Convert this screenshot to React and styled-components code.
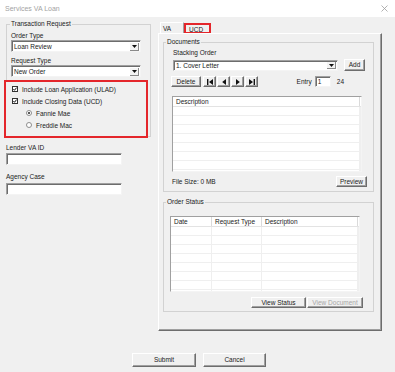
import React from 'react'
import styled, { createGlobalStyle } from 'styled-components'

const Global = createGlobalStyle`
  body {
    margin: 0;
    background: #f0f0f0;
    font-family: "Liberation Sans", Arial, sans-serif;
    font-size: 6.5px;
    color: #1a1a1a;
  }
`

const Window = styled.div`
  width: 395px;
  height: 372px;
  background: #f0f0f0;
  display: flex;
  flex-direction: column;
  overflow: hidden;
`

const TitleBar = styled.div`
  height: 17px;
  flex: none;
  background: #fff;
  color: #a3a3a3;
  font-size: 7px;
  display: flex;
  align-items: center;
  justify-content: space-between;
  padding: 0 7px 0 5px;
`

const Main = styled.div`
  display: flex;
  align-items: flex-start;
  gap: 7px;
  padding-left: 6px;
`

const LeftCol = styled.div`
  width: 145px;
  display: flex;
  flex-direction: column;
  margin-top: 3px;
`

const Group = styled.fieldset`
  margin: ${p => p.$mt || 0}px 0 0;
  padding: ${p => p.$pad};
  border: 1px solid #d2d2d2;
  min-width: 0;
  display: flex;
  flex-direction: column;
`

const Legend = styled.legend`
  padding: 0 1px;
  margin-left: ${p => p.$ml}px;
  line-height: 8px;
`

const Label = styled.div`
  height: 9px;
  line-height: 9px;
  margin-top: ${p => p.$mt || 0}px;
  white-space: nowrap;
`

const sunken = `
  background: #fff;
  border: 1px solid;
  border-color: #a0a0a0 #f4f4f4 #f4f4f4 #a0a0a0;
  box-shadow: inset 1px 1px 0 #6d6d6d;
  box-sizing: border-box;
`

const Combo = styled.div`
  ${sunken}
  width: ${p => p.$w}px;
  height: ${p => p.$h || 12}px;
  flex: none;
  display: flex;
  align-items: center;
  padding-left: 2px;
`

const ComboText = styled.span`
  flex: 1;
  white-space: nowrap;
`

const ComboArrow = styled.span`
  width: 8px;
  height: calc(100% - 3px);
  margin-right: 1px;
  margin-top: 1px;
  background: #f4f4f4;
  border-right: 1px solid #8a8a8a;
  border-bottom: 1px solid #8a8a8a;
  display: flex;
  align-items: center;
  justify-content: center;
`

const TextBox = styled.div`
  ${sunken}
  width: ${p => p.$w}px;
  height: ${p => p.$h || 12}px;
  flex: none;
  padding-left: 2px;
  line-height: ${p => (p.$h || 12) - 2}px;
`

const CheckPanel = styled.div`
  margin: 3px -3px -2px -7px;
  border: 2px solid #e4262b;
  background: #f0f0f0;
  padding: 1px 0 5px 6px;
`

const CheckRow = styled.div`
  height: 12px;
  display: flex;
  align-items: center;
  gap: 4px;
  padding-left: ${p => p.$indent || 0}px;
  white-space: nowrap;
`

const CheckBox = styled.span`
  width: 6px;
  height: 6px;
  box-sizing: border-box;
  border: 1px solid #333;
  background: #fff;
  display: flex;
  align-items: center;
  justify-content: center;
`

const Radio = styled.span`
  width: 6px;
  height: 6px;
  box-sizing: border-box;
  border: 1px solid #8d8d8d;
  border-radius: 50%;
  background: #fff;
  display: flex;
  align-items: center;
  justify-content: center;
  &::after {
    content: "";
    width: 2px;
    height: 2px;
    border-radius: 50%;
    background: ${p => (p.$on ? '#222' : 'transparent')};
  }
`

const TabControl = styled.div`
  width: 224px;
  margin-top: 5px;
  display: flex;
  flex-direction: column;
`

const TabStrip = styled.div`
  height: 11px;
  display: flex;
  align-items: flex-end;
  padding-left: 2px;
`

const Tab = styled.div`
  width: ${p => p.$w}px;
  height: ${p => (p.$active ? 11 : 11)}px;
  box-sizing: border-box;
  padding-left: ${p => p.$pl}px;
  display: flex;
  align-items: center;
  border-left: 1px solid ${p => (p.$active ? '#fff' : 'transparent')};
  border-top: 1px solid ${p => (p.$active ? '#fff' : 'transparent')};
  border-right: 1px solid ${p => (p.$active ? '#a0a0a0' : 'transparent')};
  margin-bottom: ${p => (p.$active ? 0 : -1)}px;
  outline: ${p => (p.$marked ? '2px solid #e4262b' : 'none')};
  outline-offset: -2px;
`

const Panel = styled.div`
  height: 298px;
  box-sizing: border-box;
  border: 1px solid;
  border-color: #fff #6d6d6d #6d6d6d #fff;
  box-shadow: inset -1px -1px 0 #a0a0a0;
  padding: 4px 7px 0 4px;
  display: flex;
  flex-direction: column;
`

const Row = styled.div`
  display: flex;
  align-items: center;
  height: ${p => p.$h}px;
  margin-top: ${p => p.$mt || 0}px;
  gap: ${p => p.$gap || 0}px;
  justify-content: ${p => p.$justify || 'flex-start'};
`

const Btn = styled.button`
  width: ${p => p.$w}px;
  height: ${p => p.$h || 11}px;
  flex: none;
  margin: ${p => p.$m || 0};
  padding: 0;
  box-sizing: border-box;
  font: inherit;
  line-height: ${p => (p.$h || 11) - 2}px;
  color: ${p => (p.disabled ? '#a6a6a6' : '#1a1a1a')};
  background: #f0f0f0;
  border: 1px solid;
  border-color: #fff #6d6d6d #6d6d6d #fff;
  box-shadow: inset -1px -1px 0 #a0a0a0;
  display: flex;
  align-items: center;
  justify-content: center;
`

const NavGroup = styled.div`
  display: flex;
  gap: 1px;
  margin-left: 2px;
`

const EntryGroup = styled.div`
  display: flex;
  align-items: center;
  margin-left: auto;
  margin-right: 21px;
`

const List = styled.div`
  ${sunken}
  width: 190px;
  height: 76px;
  flex: none;
  margin-left: ${p => p.$ml || 0}px;
  display: flex;
  flex-direction: column;
  overflow: hidden;
`

const ListHead = styled.div`
  display: grid;
  grid-template-columns: ${p => p.$cols};
  height: 9px;
  flex: none;
  border-bottom: 1px solid #e3e3e3;
  background: #fff;
`

const HeadCell = styled.div`
  padding-left: 3px;
  line-height: 9px;
  border-right: 1px solid #dadada;
  white-space: nowrap;
  overflow: hidden;
`

const ListBody = styled.div`
  flex: 1;
  display: grid;
  grid-template-columns: ${p => p.$cols};
  background: repeating-linear-gradient(to bottom, #fff 0 8px, #efefef 8px 9px);
`

const BodyCell = styled.div`
  border-right: 1px solid #efefef;
`

const Footer = styled.div`
  display: flex;
  justify-content: center;
  gap: 7px;
  padding-left: 3px;
  margin-top: 22px;
`

const Tri = ({ d }) => (
  <svg width="6" height="6" viewBox="0 0 6 6">
    <path d={d} fill="#111" />
  </svg>
)

const navIcons = [
  'M0 0h1.4v6H0z M6 0v6L2 3z',
  'M5 0v6L1.2 3z',
  'M1 0v6L4.8 3z',
  'M0 0v6L4 3z M4.6 0H6v6H4.6z',
]

function DataList({ cols, heads }) {
  return (
    <>
      <ListHead $cols={cols}>
        {heads.map((h, i) => (
          <HeadCell key={i}>{h}</HeadCell>
        ))}
      </ListHead>
      <ListBody $cols={cols}>
        {heads.map((h, i) => (
          <BodyCell key={i} />
        ))}
      </ListBody>
    </>
  )
}

export default function App() {
  return (
    <>
      <Global />
      <Window>
        <TitleBar>
          <span>Services VA Loan</span>
          <svg width="7" height="7" viewBox="0 0 7 7">
            <path d="M0.5 0.5l6 6M6.5 0.5l-6 6" stroke="#9e9e9e" strokeWidth="0.8" />
          </svg>
        </TitleBar>
        <Main>
          <LeftCol>
            <Group $pad="3px 5px 0 4px">
              <Legend $ml={-1}>Transaction Request</Legend>
              <Label>Order Type</Label>
              <Combo $w={130}>
                <ComboText>Loan Review</ComboText>
                <ComboArrow><svg width="5" height="3" viewBox="0 0 5 3"><path d="M0 0h5L2.5 3z" fill="#111" /></svg></ComboArrow>
              </Combo>
              <Label $mt={4}>Request Type</Label>
              <Combo $w={130}>
                <ComboText>New Order</ComboText>
                <ComboArrow><svg width="5" height="3" viewBox="0 0 5 3"><path d="M0 0h5L2.5 3z" fill="#111" /></svg></ComboArrow>
              </Combo>
              <CheckPanel>
                <CheckRow>
                  <CheckBox><svg width="4" height="4" viewBox="0 0 4 4"><path d="M0.4 2l1.1 1.3L3.6 0.6" stroke="#111" strokeWidth="1" fill="none" /></svg></CheckBox>
                  Include Loan Application (ULAD)
                </CheckRow>
                <CheckRow>
                  <CheckBox><svg width="4" height="4" viewBox="0 0 4 4"><path d="M0.4 2l1.1 1.3L3.6 0.6" stroke="#111" strokeWidth="1" fill="none" /></svg></CheckBox>
                  Include Closing Data (UCD)
                </CheckRow>
                <CheckRow $indent={14}>
                  <Radio $on />
                  Fannie Mae
                </CheckRow>
                <CheckRow $indent={14}>
                  <Radio />
                  Freddie Mac
                </CheckRow>
              </CheckPanel>
            </Group>
            <Label $mt={6}>Lender VA ID</Label>
            <TextBox $w={116} style={{ marginTop: 1 }} />
            <Label $mt={7}>Agency Case</Label>
            <TextBox $w={116} style={{ marginTop: 2 }} />
          </LeftCol>

          <TabControl>
            <TabStrip>
              <Tab $w={24} $pl={2} $active>VA</Tab>
              <Tab $w={27} $pl={4} $marked>UCD</Tab>
            </TabStrip>
            <Panel>
              <Group $pad="2px 8px 4px 9px">
                <Legend $ml={-7}>Documents</Legend>
                <Label>Stacking Order</Label>
                <Row $h={12} $mt={2} $gap={6}>
                  <Combo $w={165} $h={11}>
                    <ComboText>1. Cover Letter</ComboText>
                    <ComboArrow><svg width="5" height="3" viewBox="0 0 5 3"><path d="M0 0h5L2.5 3z" fill="#111" /></svg></ComboArrow>
                  </Combo>
                  <Btn $w={21} $h={12}>Add</Btn>
                </Row>
                <Row $h={11} $mt={5}>
                  <Btn $w={30} $m="0 0 0 -2px">Delete</Btn>
                  <NavGroup>
                    {navIcons.map((d, i) => (
                      <Btn key={i} $w={13}><Tri d={d} /></Btn>
                    ))}
                  </NavGroup>
                  <EntryGroup>
                    <span>Entry</span>
                    <TextBox $w={16} $h={11} style={{ margin: '0 6px 0 3px' }}>1</TextBox>
                    <span>24</span>
                  </EntryGroup>
                </Row>
                <List $ml={-1} style={{ marginTop: 9 }}>
                  <DataList cols="187px 1fr" heads={['Description', '']} />
                </List>
                <Row $h={11} $mt={4} $justify="space-between">
                  <span style={{ marginLeft: -1 }}>File Size: 0 MB</span>
                  <Btn $w={31} $m="0 -2px 0 0">Preview</Btn>
                </Row>
              </Group>
              <Group $mt={6} $pad="10px 10px 3px 6px">
                <Legend $ml={-4}>Order Status</Legend>
                <List>
                  <DataList cols="41px 50px 96px 1fr" heads={['Date', 'Request Type', 'Description', '']} />
                </List>
                <Row $h={11} $mt={5} $justify="flex-end" $gap={1}>
                  <Btn $w={55}>View Status</Btn>
                  <Btn $w={56} disabled>View Document</Btn>
                </Row>
              </Group>
            </Panel>
          </TabControl>
        </Main>
        <Footer>
          <Btn $w={64} $h={14}>Submit</Btn>
          <Btn $w={63} $h={14}>Cancel</Btn>
        </Footer>
      </Window>
    </>
  )
}
